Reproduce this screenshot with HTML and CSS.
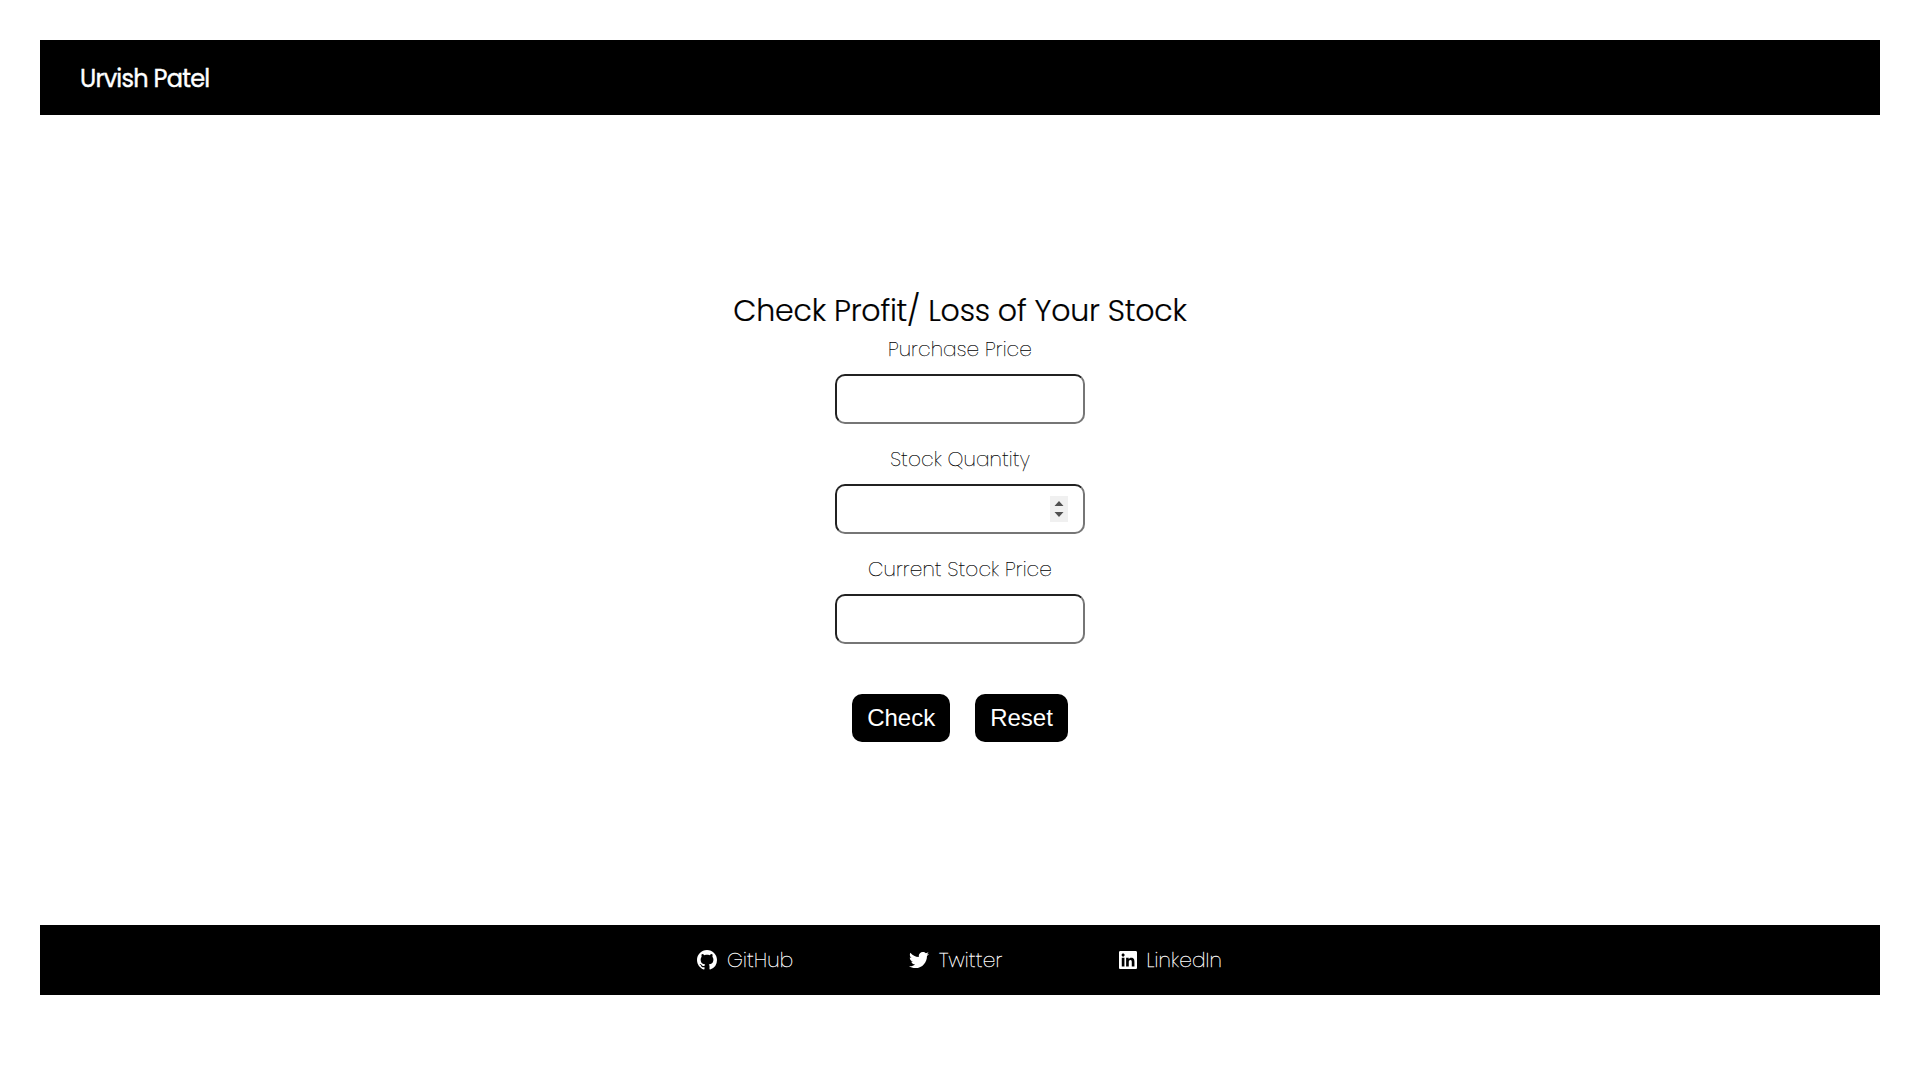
FILE: index.html
```html
<!DOCTYPE html>
<html lang="en">
<head>
<meta charset="utf-8">
<title>Profit or Loss</title>
<link rel="stylesheet" href="styles.css">
</head>
<body>
<header class="navbar"><span class="brand">Urvish Patel</span></header>
<main class="calculator">
  <h1 class="title">Check Profit/ Loss of Your Stock</h1>
  <form class="form">
    <label class="label" for="purchase">Purchase Price</label>
    <input class="field" id="purchase" type="text">
    <label class="label" for="quantity">Stock Quantity</label>
    <input class="field" id="quantity" type="number">
    <label class="label" for="current">Current Stock Price</label>
    <input class="field" id="current" type="text">
    <div class="actions">
      <button class="button" type="button">Check</button>
      <button class="button" type="reset">Reset</button>
    </div>
  </form>
</main>
<footer class="footer">
  <a class="link github"><svg class="icon" viewBox="0 0 16 16"><path d="M8 0C3.58 0 0 3.58 0 8c0 3.54 2.29 6.53 5.47 7.59.4.07.55-.17.55-.38 0-.19-.01-.82-.01-1.49-2.01.37-2.53-.49-2.69-.94-.09-.23-.48-.94-.82-1.13-.28-.15-.68-.52-.01-.53.63-.01 1.08.58 1.23.82.72 1.21 1.87.87 2.33.66.07-.52.28-.87.51-1.07-1.78-.2-3.64-.89-3.64-3.95 0-.87.31-1.59.82-2.15-.08-.2-.36-1.02.08-2.12 0 0 .67-.21 2.2.82.64-.18 1.32-.27 2-.27s1.36.09 2 .27c1.53-1.04 2.2-.82 2.2-.82.44 1.1.16 1.92.08 2.12.51.56.82 1.27.82 2.15 0 3.07-1.87 3.75-3.65 3.95.29.25.54.73.54 1.48 0 1.07-.01 1.93-.01 2.2 0 .21.15.46.55.38A8.01 8.01 0 0 0 16 8c0-4.42-3.58-8-8-8z"/></svg><span class="link-text">GitHub</span></a>
  <a class="link twitter"><svg class="icon" viewBox="0 0 512 512"><path d="M459.37 151.716c.325 4.548.325 9.097.325 13.645 0 138.72-105.583 298.558-298.558 298.558-59.452 0-114.68-17.219-161.137-47.106 8.447.974 16.568 1.299 25.34 1.299 49.055 0 94.213-16.568 130.274-44.832-46.132-.975-84.792-31.188-98.112-72.772 6.498.974 12.995 1.624 19.818 1.624 9.421 0 18.843-1.3 27.614-3.573-48.081-9.747-84.143-51.98-84.143-102.985v-1.299c13.969 7.797 30.214 12.67 47.431 13.319-28.264-18.843-46.781-51.005-46.781-87.391 0-19.492 5.197-37.36 14.294-52.954 51.655 63.675 129.3 105.258 216.365 109.807-1.624-7.797-2.599-15.918-2.599-24.04 0-57.828 46.782-104.934 104.934-104.934 30.213 0 57.502 12.67 76.67 33.137 23.715-4.548 46.456-13.32 66.599-25.34-7.798 24.366-24.366 44.833-46.132 57.827 21.117-2.273 41.584-8.122 60.426-16.243-14.292 20.791-32.161 39.308-52.628 54.253z"/></svg><span class="link-text">Twitter</span></a>
  <a class="link linkedin"><svg class="icon icon-linkedin" viewBox="0 0 448 448"><path d="M416 0H31.900C14.300 0 0 14.500 0 32.300v383.400C0 433.500 14.300 448 31.900 448H416c17.600 0 32-14.500 32-32.300V32.300C448 14.500 433.600 0 416 0zM135.400 384H69V170.200h66.500V384zM102.200 141C80.900 141 63.700 123.700 63.700 102.500S80.900 64 102.200 64c21.200 0 38.500 17.300 38.500 38.500 0 21.300-17.200 38.500-38.500 38.500zM384.300 384h-66.400V280c0-24.800-.5-56.700-34.500-56.700-34.600 0-39.900 27-39.900 54.900V384h-66.400V170.200h63.700v29.200h.9c8.900-16.800 30.600-34.500 62.900-34.500 67.200 0 79.700 44.300 79.700 101.900V384z"/></svg><span class="link-text">LinkedIn</span></a>
</footer>
</body>
</html>
```
FILE: styles.css
```css
* { box-sizing: border-box; margin: 0; padding: 0; }
body {
  height: 1080px;
  padding: 40px;
  background: #fff;
  color: #000;
  font-family: Poppins, Inter, sans-serif;
}
.navbar {
  display: flex;
  align-items: center;
  height: 75px;
  padding: 1px 40px 0;
  background: #000;
  color: #fff;
}
.brand {
  font-size: 24px;
  font-weight: 400;
  letter-spacing: -0.75px;
  -webkit-text-stroke: 0.4px #fff;
}
.calculator {
  display: flex;
  flex-direction: column;
  align-items: center;
  height: 810px;
  padding-top: 173px;
}
.title {
  font-size: 30px;
  font-weight: 300;
  line-height: 46px;
  letter-spacing: -0.2px;
  white-space: nowrap;
  -webkit-text-stroke: 0.2px #000;
}
.form { display: flex; flex-direction: column; align-items: center; }
.label {
  font-size: 20px;
  font-weight: 200;
  line-height: 30px;
  letter-spacing: 0.13px;
  white-space: nowrap;
  -webkit-text-stroke: 0.25px #000;
}
.field {
  width: 250px;
  height: 50px;
  margin: 10px 0 20px;
  padding: 0 15px;
  border: 2px inset #767676;
  border-radius: 10px;
  background: #fff;
  font: 20px "Liberation Sans", sans-serif;
}
.field::-webkit-inner-spin-button {
  -webkit-appearance: none;
  width: 18px;
  height: 26px;
  opacity: 1;
  background: #f0f0f0 url("data:image/svg+xml,%3Csvg xmlns='http://www.w3.org/2000/svg' viewBox='0 0 18 26'%3E%3Cpath fill='%23505050' d='M4.500 10L9 5l4.500 5zM4.500 16h9L9 21z'/%3E%3C/svg%3E") no-repeat;
}
.actions { display: flex; gap: 25px; margin-top: 30px; }
.button {
  height: 48px;
  padding: 0 15px;
  border: 0;
  border-radius: 10px;
  background: #000;
  color: #fff;
  font: 24px "Liberation Sans", sans-serif;
}
.footer {
  display: flex;
  align-items: center;
  height: 70px;
  padding-left: 657px;
  background: #000;
  color: #fff;
}
.link { display: flex; align-items: center; gap: 10px; font-size: 20px; font-weight: 200; }
.link-text { letter-spacing: 0.2px; -webkit-text-stroke: 0.3px #fff; }
.github { width: 212px; }
.twitter { width: 209.5px; }
.icon { width: 20px; height: 20px; fill: #fff; }
.icon-linkedin { width: 18px; height: 18px; }
```
